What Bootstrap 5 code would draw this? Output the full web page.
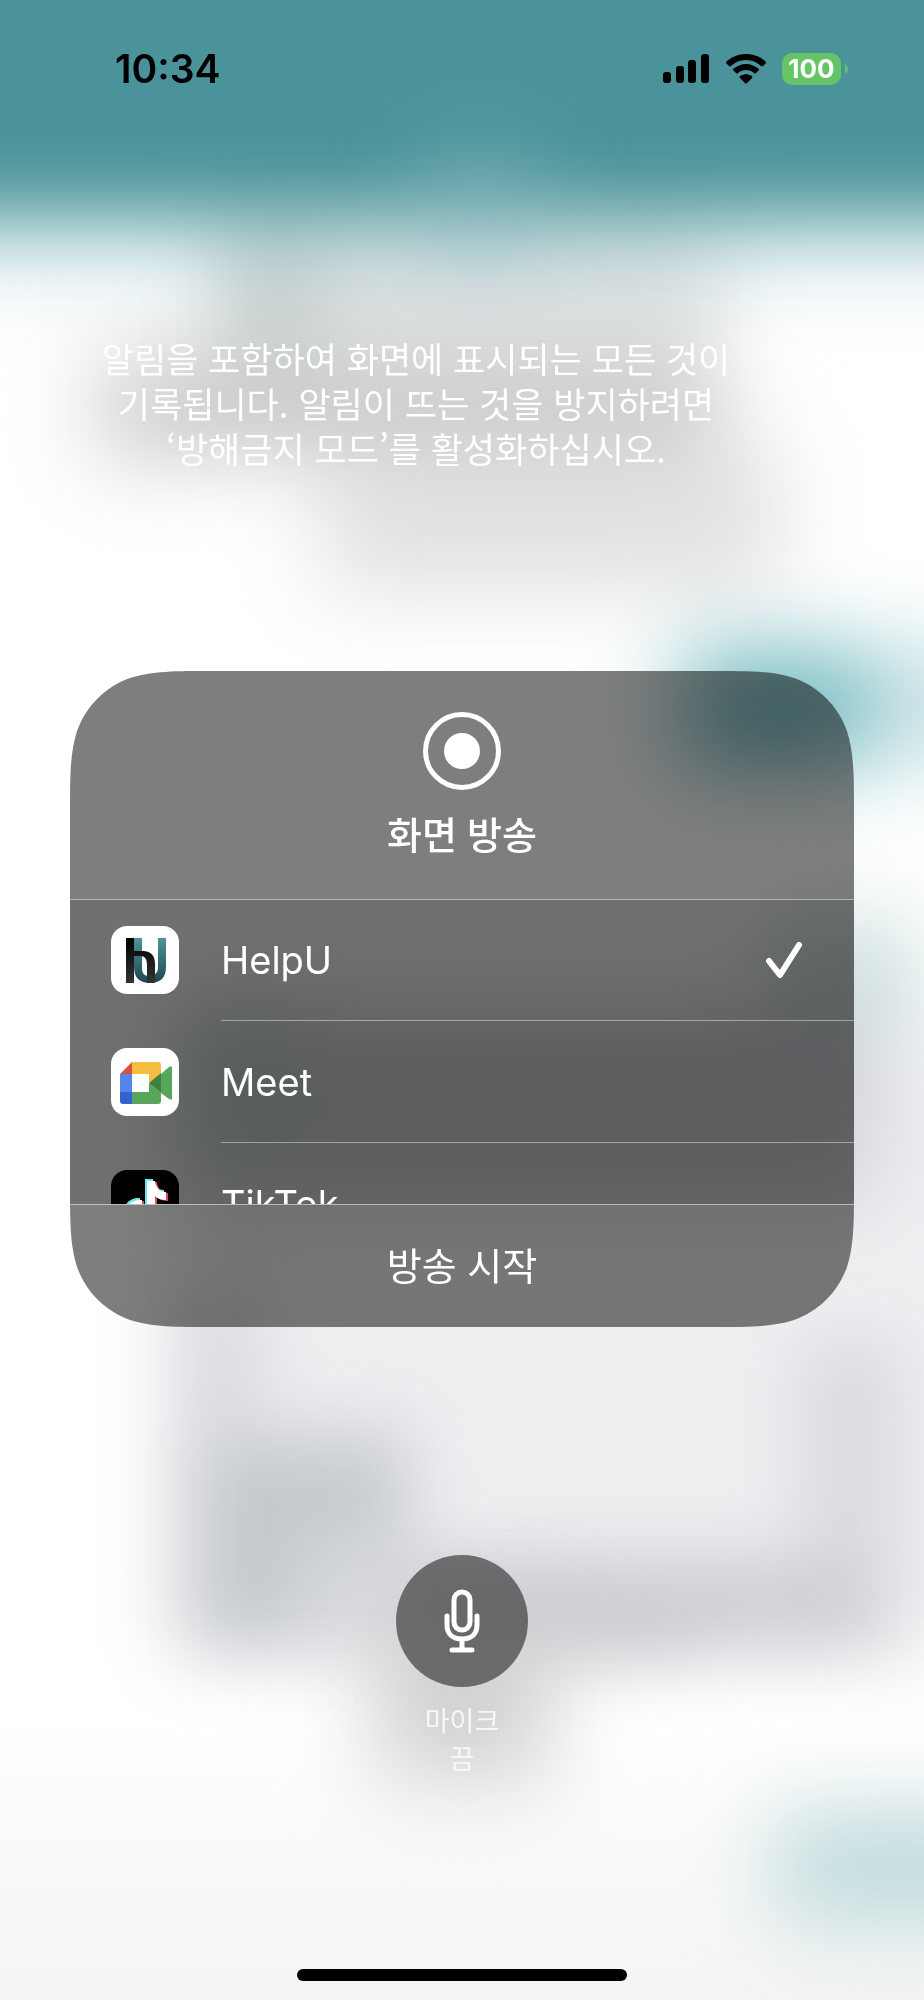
<!DOCTYPE html>
<html lang="ko">
<head>
<meta charset="utf-8">
<meta name="viewport" content="width=device-width, initial-scale=1">
<title>화면 방송</title>
<link href="https://cdn.jsdelivr.net/npm/bootstrap@5.3.0/dist/css/bootstrap.min.css" rel="stylesheet">
<style>
  body { font-family: Inter, "Noto Sans CJK KR", sans-serif; background: #fff; color: #fff; isolation: isolate; }
  .backdrop { z-index: -1; }
  .status { padding: 49px 76px 0 115px; color: #000; }
  .clock { font-size: 39px; line-height: 40px; font-weight: 600; }
  .battery { width: 59px; height: 32px; border-radius: 10px; background: #65c466; color: #fff; font-size: 26px; line-height: 32px; font-weight: 700; }
  .notice { margin: 246px 162px 0 70px; font-size: 35px; line-height: 45px; font-family: "Noto Sans CJK KR", sans-serif; white-space: nowrap; }
  .panel { margin: 201px 70px 0; clip-path: url(#panel-shape); }
  .panel-head { height: 228px; padding-top: 41px; background: rgba(0,0,0,.505); }
  .panel-title { font-size: 38px; line-height: 48px; font-weight: 500; margin-top: 21px; }
  .app-list { height: 305px; overflow-y: auto; scrollbar-width: none; background: rgba(0,0,0,.56); box-shadow: inset 0 1px rgba(255,255,255,.5); }
  .app-list::-webkit-scrollbar { display: none; }
  .app-row { padding: 0 0 0 41px; border: 0; background: none; color: #fff; gap: 42px; font-size: 38px; line-height: 48px; }
  .app-label { height: 122px; padding-right: 50px; border-bottom: 1px solid rgba(255,255,255,.42); }
  .start { height: 123px; border: 0; border-top: 1px solid rgba(255,255,255,.5); background: rgba(0,0,0,.505); color: #fff; font-size: 38px; line-height: 48px; }
  .mic { width: 132px; height: 132px; border: 0; background: rgba(0,0,0,.5); }
  .mic-area { margin-top: 228px; }
  .mic-label { font-size: 27px; line-height: 38px; margin-top: 16px; color: rgba(255,255,255,.8); }
  .home-bar { width: 330px; max-width: 60%; height: 12px; border-radius: 6px; background: #000; margin-bottom: 19px; }
</style>
</head>
<body class="min-vh-100 position-relative d-flex flex-column">

<svg class="backdrop position-absolute top-0 start-0 w-100 h-100" viewBox="0 0 924 2000" preserveAspectRatio="none" aria-hidden="true">
  <defs>
    <filter id="wide" filterUnits="userSpaceOnUse" x="-300" y="-300" width="1524" height="2600" color-interpolation-filters="sRGB"><feGaussianBlur stdDeviation="44"/></filter>
    <filter id="soft" filterUnits="userSpaceOnUse" x="-300" y="-300" width="1524" height="2600" color-interpolation-filters="sRGB"><feGaussianBlur stdDeviation="34"/></filter>
    <linearGradient id="floor" x1="0" y1="0" x2="0" y2="1"><stop offset="0" stop-color="#f4f4f4" stop-opacity="0"/><stop offset="1" stop-color="#f4f4f4"/></linearGradient>
    <clipPath id="panel-shape" clipPathUnits="objectBoundingBox">
      <path transform="scale(.00127551 .00152439)" d="M145 0H639C681 0 701 0 724 7C749 16 768 35 777 60C784 83 784 103 784 145V511C784 553 784 573 777 596C768 621 749 640 724 649C701 656 681 656 639 656H145C103 656 83 656 60 649C35 640 16 621 7 596C0 573 0 553 0 511V145C0 103 0 83 7 60C16 35 35 16 60 7C83 0 103 0 145 0Z"/>
    </clipPath>
  </defs>
  <rect width="924" height="2000" fill="#fff"/>
  <rect y="1720" width="924" height="280" fill="url(#floor)"/>
  <g filter="url(#wide)">
    <path d="M225 150H720V440H780V590H320V465H90V345H225Z" fill="#e2e3e3"/>
    <path d="M110 365H720V445H110Z" fill="#c8c8c8"/>
    <rect x="340" y="530" width="430" height="50" fill="#dedede"/>
    <rect x="670" y="645" width="400" height="120" fill="#cce4e7"/>
    <rect x="690" y="655" width="180" height="110" fill="#6fb8bd"/>
    <rect x="770" y="920" width="150" height="140" fill="#cee0e0"/>
    <rect x="170" y="1040" width="930" height="600" fill="#efeff2"/>
    <path d="M180 1010H880V1200H180Z" fill="#d2d3d9"/>
    <rect x="180" y="1000" width="110" height="170" fill="#c3d0cd"/>
  </g>
  <g filter="url(#soft)">
    <path d="M180 1290H260V1420H415V1550H800V1340H900V1655H180Z" fill="#d8dade"/>
    <path d="M200 1450H400V1540H300V1640H200Z" fill="#c5c9cd"/>
    <path d="M415 1575H870V1630H700V1660H415Z" fill="#c9cbcf"/>
  </g>
  <g filter="url(#wide)">
    <rect x="375" y="1620" width="175" height="160" fill="#d0d0d0"/>
    <rect x="775" y="1815" width="250" height="105" fill="#bcd8da"/>
  </g>
  <g filter="url(#wide)">
    <rect x="235" y="200" width="70" height="180" fill="#b2babb" opacity=".7"/>
    <rect x="-300" y="150" width="1524" height="115" fill="#a5cdd0" opacity=".6"/>
  </g>
  <g filter="url(#soft)">
    <rect x="-300" y="-300" width="1524" height="512" fill="#4b939a"/>
  </g>
  <g filter="url(#wide)">
    <ellipse cx="480" cy="200" rx="65" ry="60" fill="#8abdc3" opacity=".45"/>
  </g>
</svg>

<header class="status d-flex justify-content-between align-items-center">
  <time class="clock">10:34</time>
  <div class="d-flex align-items-center">
    <svg class="me-3" width="47" height="30" viewBox="0 0 47 30" aria-label="신호"><rect y="18" width="8" height="11" rx="3"/><rect x="13" y="12" width="8" height="17" rx="3"/><rect x="25" y="6" width="8" height="23" rx="3"/><rect x="38" width="8" height="29" rx="3"/></svg>
    <svg class="me-3" width="40" height="30" viewBox="0 0 40 30" aria-label="와이파이"><path d="M20 0C28 0 35 3 40 8C40 9 40 9 39 10L37 12C36 13 36 12 35 12C31 8 26 6 20 6S9 8 5 12C4 12 4 13 3 12L1 10C0 9 0 9 0 8C5 3 12 0 20 0ZM20 10C25 10 29 12 33 15C33 16 33 16 32 17L30 19C29 20 29 20 28 19C26 17 23 16 20 16S14 17 12 19C11 20 11 20 10 19L8 17C7 16 7 16 7 15C11 12 15 10 20 10ZM20 20C22 20 24 21 26 22C27 23 26 24 26 24L21 29Q20 30 19 29L14 24C14 24 13 23 14 22C16 21 18 20 20 20Z"/></svg>
    <div class="battery text-center">100</div>
    <svg class="ms-1" width="3" height="10" viewBox="0 0 3 10" aria-hidden="true"><path d="M0 0Q3 2 3 5T0 10Z" fill="#65c466"/></svg>
  </div>
</header>

<main class="flex-grow-1">
  <p class="notice text-center">알림을 포함하여 화면에 표시되는 모든 것이<br>기록됩니다. 알림이 뜨는 것을 방지하려면<br>‘방해금지 모드’를 활성화하십시오.</p>

  <section class="panel">
    <div class="panel-head d-flex flex-column align-items-center">
      <svg width="78" height="78" viewBox="0 0 78 78" aria-hidden="true"><circle cx="39" cy="39" r="36.500" fill="none" stroke="#fff" stroke-width="5"/><circle cx="39" cy="39" r="18" fill="#fff"/></svg>
      <h1 class="panel-title mb-0">화면 방송</h1>
    </div>
    <div class="app-list">
      <button type="button" class="app-row d-flex align-items-center w-100 text-start" aria-pressed="true">
        <svg class="flex-shrink-0" width="68" height="68" viewBox="0 0 68 68" aria-hidden="true">
          <defs><linearGradient id="teal" x1="0" y1="0" x2="0" y2="1"><stop stop-color="#4b959c"/><stop offset="1" stop-color="#1d474c"/></linearGradient><linearGradient id="ink" x1="0" y1="0" x2="0" y2="1"><stop/><stop offset="1" stop-color="#333"/></linearGradient></defs>
          <rect width="68" height="68" rx="16" fill="#fff"/>
          <path d="M23 12H31V42C31 47 33 50 38 50S47 47 47 42V12H55V41C55 52 49 57 39 57S23 52 23 41Z" fill="url(#teal)"/>
          <path d="M15 12H23V25H32C40 25 44 30 44 38V57H36V39C36 33 34 30 29 30H23V57H15Z" fill="url(#ink)"/>
        </svg>
        <span class="app-label flex-grow-1 d-flex align-items-center justify-content-between">HelpU
          <svg width="40" height="40" viewBox="0 0 40 40" aria-hidden="true"><path d="M5 21L16 35L35 5" fill="none" stroke="#fff" stroke-width="6" stroke-linecap="round" stroke-linejoin="round"/></svg>
        </span>
      </button>
      <button type="button" class="app-row d-flex align-items-center w-100 text-start">
        <svg class="flex-shrink-0" width="68" height="68" viewBox="0 0 68 68" aria-hidden="true">
          <rect width="68" height="68" rx="16" fill="#fff"/>
          <path d="M9 26L21 14V26Z" fill="#d9503f"/><path d="M21 14H47Q50 14 50 17V26L38 35V26H21Z" fill="#f2bd42"/>
          <path d="M9 26H21V44H9Z" fill="#5484ed"/><path d="M9 44H21V56H12Q9 56 9 53Z" fill="#3063cc"/>
          <path d="M21 44H38V35L50 45V53Q50 56 47 56H21Z" fill="#58a65c"/><path d="M50 26L58 19Q61 17 61 20V50Q61 53 58 51L50 45Z" fill="#58a65c"/><path d="M38 35L50 25V45Z" fill="#3e8141"/>
        </svg>
        <span class="app-label flex-grow-1 d-flex align-items-center">Meet</span>
      </button>
      <button type="button" class="app-row d-flex align-items-center w-100 text-start">
        <svg class="flex-shrink-0" width="68" height="68" viewBox="0 0 68 68" aria-hidden="true">
          <defs><path id="note" d="M35 10H43C44 17 48 21 54 21V29C50 29 46 28 43 25V43C43 62 14 61 14 43C14 34 21 28 30 29V37C19 35 19 49 28 49C32 49 35 46 35 42Z"/></defs>
          <rect width="68" height="68" rx="16"/><use href="#note" x="-1" y="-1" fill="#68e8e6"/><use href="#note" x="3" y="2" fill="#ea4359"/><use href="#note" x="1" y="1" fill="#fff"/>
        </svg>
        <span class="app-label flex-grow-1 d-flex align-items-center">TikTok</span>
      </button>
    </div>
    <button type="button" class="start d-block w-100">방송 시작</button>
  </section>

  <div class="mic-area d-flex flex-column align-items-center">
    <button type="button" class="mic rounded-circle d-flex align-items-center justify-content-center p-0" aria-labelledby="mic-label">
      <svg width="36" height="64" viewBox="0 0 36 64" fill="none" stroke="#fff" stroke-width="5" stroke-linecap="round" aria-hidden="true"><rect x="10" y="3" width="16" height="38" rx="8"/><path d="M3 27V36C3 45 9 50 18 50S33 45 33 36V27M18 50V60M8 61H28"/></svg>
    </button>
    <div id="mic-label" class="mic-label text-center">마이크<br>끔</div>
  </div>
</main>

<footer><div class="home-bar mx-auto"></div></footer>
<script src="https://cdn.jsdelivr.net/npm/bootstrap@5.3.0/dist/js/bootstrap.bundle.min.js"></script>
</body>
</html>
